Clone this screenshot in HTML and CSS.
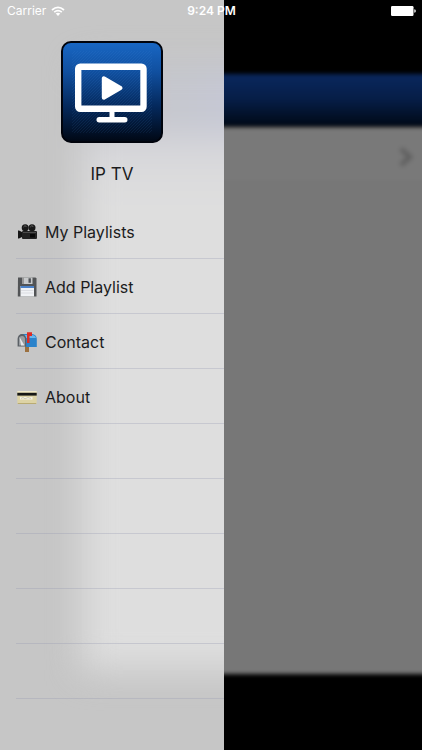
FILE: index.html
```html
<!DOCTYPE html>
<html lang="en">
<head>
<meta charset="utf-8">
<meta name="viewport" content="width=device-width, initial-scale=1">
<title>IP TV</title>
<link rel="stylesheet" href="styles.css">
</head>
<body>
<header class="status">
  <span class="status-carrier">Carrier
    <svg class="wifi" viewBox="0 0 14 10" aria-hidden="true"><path d="M1 4Q7-1.300 13 4M3.200 6.200Q7 2.900 10.800 6.200" fill="none" stroke="#fff" stroke-width="1.700"/><path d="M4.700 7.600Q7 5.800 9.300 7.600L7 10Z" fill="#fff"/></svg>
  </span>
  <time class="status-time">9:24 PM</time>
  <svg class="battery" viewBox="0 0 25 10" aria-hidden="true"><rect width="22.500" height="10" rx="1.200" fill="#fff"/><path d="M23.300 3.300Q24.800 3.500 24.800 5T23.300 6.700Z" fill="#fff"/></svg>
</header>
<div class="app">
  <aside class="drawer">
    <div class="glow"></div>
    <svg class="logo" viewBox="0 0 102 102" role="img" aria-label="IP TV logo">
      <defs>
        <linearGradient id="tile" x1="0" y1="0" x2="0" y2="1"><stop offset="0" stop-color="#1967c4"/><stop offset=".3" stop-color="#104f9f"/><stop offset=".65" stop-color="#04285b"/><stop offset="1" stop-color="#000713"/></linearGradient>
        <pattern id="hatch" width="3" height="3" patternUnits="userSpaceOnUse"><path d="M0 3L3 0" stroke="#55a0e5" stroke-opacity=".16" stroke-width=".6"/></pattern>
      </defs>
      <rect x="1" y="1" width="100" height="100" rx="9" fill="url(#tile)" stroke="#00030c" stroke-width="2"/>
      <rect x="11" y="10" width="80" height="82" fill="url(#hatch)"/>
      <rect x="17.200" y="25.700" width="65.300" height="42" rx="2" fill="none" stroke="#fff" stroke-width="6.400"/>
      <path d="M48.500 70h5v7h-5z" fill="#fff"/>
      <rect x="35.500" y="76" width="31" height="5.500" rx="2.700" fill="#fff"/>
      <path d="M42.800 37.300v19.400L59.500 47z" fill="#fff" stroke="#fff" stroke-width="4" stroke-linejoin="round"/>
    </svg>
    <h1 class="title">IP TV</h1>
    <nav>
      <ul class="menu">
        <li><a href="#playlists">
          <svg class="icon" viewBox="0 0 20 20" aria-hidden="true"><path d="M1 8.500l1 0 3 1.500v5L2 16.500H1z" fill="#161616"/><rect x="5" y="9" width="15" height="8" rx="1" fill="#222"/><circle cx="8.200" cy="5.700" r="3.500" fill="#191919"/><circle cx="15" cy="5.700" r="3.500" fill="#191919"/><path d="M6.500 5a2 2 0 0 1 3-.6M13.300 5a2 2 0 0 1 3-.6" fill="none" stroke="#666"/><path d="M6 10.500h13" stroke="#555" stroke-width=".8"/><path d="M13 12h5v3.500h-5z" fill="#080808"/></svg>
          My Playlists</a></li>
        <li><a href="#add">
          <svg class="icon" viewBox="0 0 20 20" aria-hidden="true"><path d="M1 .5h17.500l1 1v18H.8z" fill="#525456"/><path d="M5 .5h10.500v6.500H5z" fill="#c8cacb"/><path d="M11.500 1.300h2.400v4.500h-2.400z" fill="#505357"/><path d="M5 .5h2v6.500H5z" fill="#999"/><path d="M3.500 9h13.500v10.500H3.500z" fill="#f0f2f5"/><path d="M3.500 9h13.500v2H3.500z" fill="#4c82c8"/><path d="M4 13.500h12.500M4 16h12.500" stroke="#d1d4da" stroke-width=".7"/></svg>
          Add Playlist</a></li>
        <li><a href="#contact">
          <svg class="icon" viewBox="0 0 20 20" aria-hidden="true"><path d="M8 13h4v7H8z" fill="#9c7140"/><path d="M4.500 2H15a5 5 0 0 1 4.800 5v8H9z" fill="#2b83cb"/><path d="M7 3h8q3 0 4 3H9z" fill="#6bb7ea"/><path d="M.6 7a4.300 5 0 0 1 8.600 0v7.500H.6z" fill="#5b6066"/><path d="M2 7.500a3 3.500 0 0 1 6 0v6H2z" fill="#999da1"/><path d="M2.500 5l5 8.500H4z" fill="#e5e7e9"/><path d="M10 .3h5v3.700h-2.500V11H10z" fill="#dd2c25"/></svg>
          Contact</a></li>
        <li><a href="#about">
          <svg class="icon" viewBox="0 0 20 20" aria-hidden="true"><rect x=".3" y="4" width="19.400" height="13" rx="1" fill="#ddd3a5"/><path d="M.3 4h19.400v1.500H.3z" fill="#f0e9cb"/><path d="M.3 5.800h19.400v2.800H.3z" fill="#171715"/><path d="M3 10h12.500v2.500H3z" fill="#f4f1e5"/><path d="M4 11.500l2-1 2 1.300 3-1.300 3 1" fill="none" stroke="#b5ae8b" stroke-width=".6"/><path d="M.8 16.500h18.400" stroke="#b9ab73"/></svg>
          About</a></li>
        <li></li><li></li><li></li><li></li><li></li>
      </ul>
    </nav>
  </aside>
  <main class="backdrop">
    <div class="navbar"></div>
    <div class="content">
      <svg class="chevron" viewBox="0 0 16 20" aria-hidden="true"><path d="M3 2l9 8-9 8" fill="none" stroke="#5c5c5c" stroke-width="4"/></svg>
    </div>
    <div class="footer"></div>
  </main>
</div>
</body>
</html>
```
FILE: styles.css
```css
* {
  box-sizing: border-box;
}

body {
  margin: 0;
  background: #000;
  color: #1c1c1d;
  font-family: Inter, "Liberation Sans", sans-serif;
}

.status {
  position: absolute;
  z-index: 2;
  top: 0;
  left: 0;
  right: 0;
  display: grid;
  grid-template-columns: 1fr auto 1fr;
  align-items: center;
  height: 22px;
  padding: 0 6px 0 7px;
  color: #fff;
  font-size: 12px;
  line-height: 16px;
}

.status-carrier {
  display: flex;
  align-items: center;
  gap: 5px;
}

.status-time {
  font-weight: 600;
}

.wifi {
  width: 14px;
  height: 10px;
}

.battery {
  justify-self: end;
  width: 25px;
  height: 10px;
}

.app {
  display: grid;
  grid-template-columns: 224px 1fr;
  min-height: 100vh;
}

.drawer {
  position: relative;
  overflow: hidden;
  isolation: isolate;
  padding-top: 41px;
  background: #c6c6c6;
}

/* Page behind the frosted drawer, showing through as a soft glow. */
.glow {
  position: absolute;
  z-index: -1;
  top: 66px;
  right: -80px;
  bottom: 80px;
  left: 82px;
  background:
    linear-gradient(90deg, #c6c6c6 10%, transparent 70%) top / 100% 64px no-repeat,
    linear-gradient(#c5c7d5 0 60px, #d6d6da 76px, #dedede 130px);
  filter: blur(17px);
}

.logo {
  display: block;
  width: 102px;
  height: 102px;
  margin: 0 auto;
}

.title {
  margin: 0;
  padding: 19px 0 18px;
  font-size: 17px;
  font-weight: 400;
  line-height: 24px;
  text-align: center;
}

.menu {
  margin: 0;
  padding: 0 0 0 16px;
  list-style: none;
}

.menu li {
  height: 55px;
  border-bottom: 1px solid rgba(145, 148, 175, 0.3);
}

.menu a {
  display: flex;
  align-items: center;
  gap: 8px;
  height: 100%;
  padding: 1px 0 0 1px;
  color: inherit;
  font-size: 16px;
  line-height: 24px;
  text-decoration: none;
}

.icon {
  width: 20px;
  height: 20px;
}

.backdrop {
  display: flex;
  flex-direction: column;
  overflow: hidden;
  padding-top: 74px;
  background: #000;
}

.navbar {
  height: 53px;
  margin: 0 -12px;
  background: linear-gradient(#0a285f, #061d45 50%, #000814);
  filter: blur(2px);
}

.content {
  flex: 1;
  margin: 0 -12px;
  padding: 20px 20px 0;
  background: linear-gradient(#797979 0 54px, #757575 55px 56px, #777 57px);
  filter: blur(2px);
}

.chevron {
  display: block;
  width: 16px;
  height: 20px;
  margin-left: auto;
  filter: blur(1px);
}

.footer {
  height: 76px;
}
```
